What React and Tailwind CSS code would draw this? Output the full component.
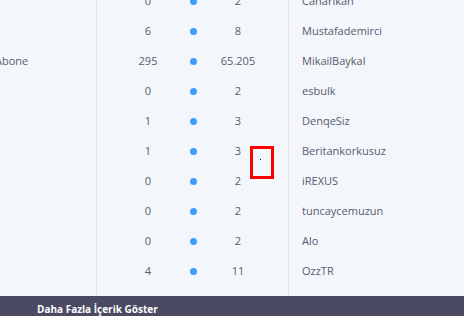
export default function App() {
  const rows = [
    ["0", "2", "Canarikan", ""],
    ["6", "8", "Mustafademirci", ""],
    ["295", "65.205", "MikailBaykal", "Abone"],
    ["0", "2", "esbulk", ""],
    ["1", "3", "DenqeSiz", ""],
    ["1", "3", "Beritankorkusuz", ""],
    ["0", "2", "iREXUS", ""],
    ["0", "2", "tuncaycemuzun", ""],
    ["0", "2", "Alo", ""],
    ["4", "11", "OzzTR", ""],
  ];
  return (
    <div
      className="relative w-[464px] h-[316px] overflow-hidden bg-[#f3f6fa] flex flex-col text-[11px] text-[#575b70]"
      style={{ fontFamily: '"Open Sans", sans-serif' }}
    >
      <div className="flex-1 flex overflow-hidden">
        <div className="w-[97px] border-r border-[#e2e6eb] flex flex-col -mt-[14px]">
          {rows.map((r, i) => (
            <div key={i} className="h-[30px] shrink-0 flex items-center -ml-[5px] whitespace-nowrap">
              {r[3]}
            </div>
          ))}
        </div>
        <div className="w-[192px] border-r border-[#e2e6eb] flex flex-col -mt-[14px]">
          {rows.map((r, i) => (
            <div key={i} className="h-[30px] shrink-0 flex items-center pl-[21px]">
              <div className="w-[60px] text-center">{r[0]}</div>
              <div className="w-[30px] flex justify-center">
                <div className="w-[7px] h-[7px] rounded-full bg-[#3d9eff]" />
              </div>
              <div className="w-[60px] text-center">{r[1]}</div>
            </div>
          ))}
        </div>
        <div className="flex-1 flex flex-col -mt-[14px] pl-[13px]">
          {rows.map((r, i) => (
            <div key={i} className="h-[30px] shrink-0 flex items-center whitespace-nowrap">
              {r[2]}
            </div>
          ))}
        </div>
      </div>
      <div className="h-[20px] shrink-0 bg-[#4a4a63] flex items-center pl-[37px] pt-[6px]">
        <span className="text-white font-bold text-[10px]">Daha Fazla İçerik Göster</span>
      </div>
      <div className="absolute left-[250px] top-[146px] w-[24px] h-[33px] border-[3px] border-[#ff0000]">
        <div className="absolute left-[7px] top-[10px] w-[1px] h-[1px] bg-black" />
      </div>
    </div>
  );
}
